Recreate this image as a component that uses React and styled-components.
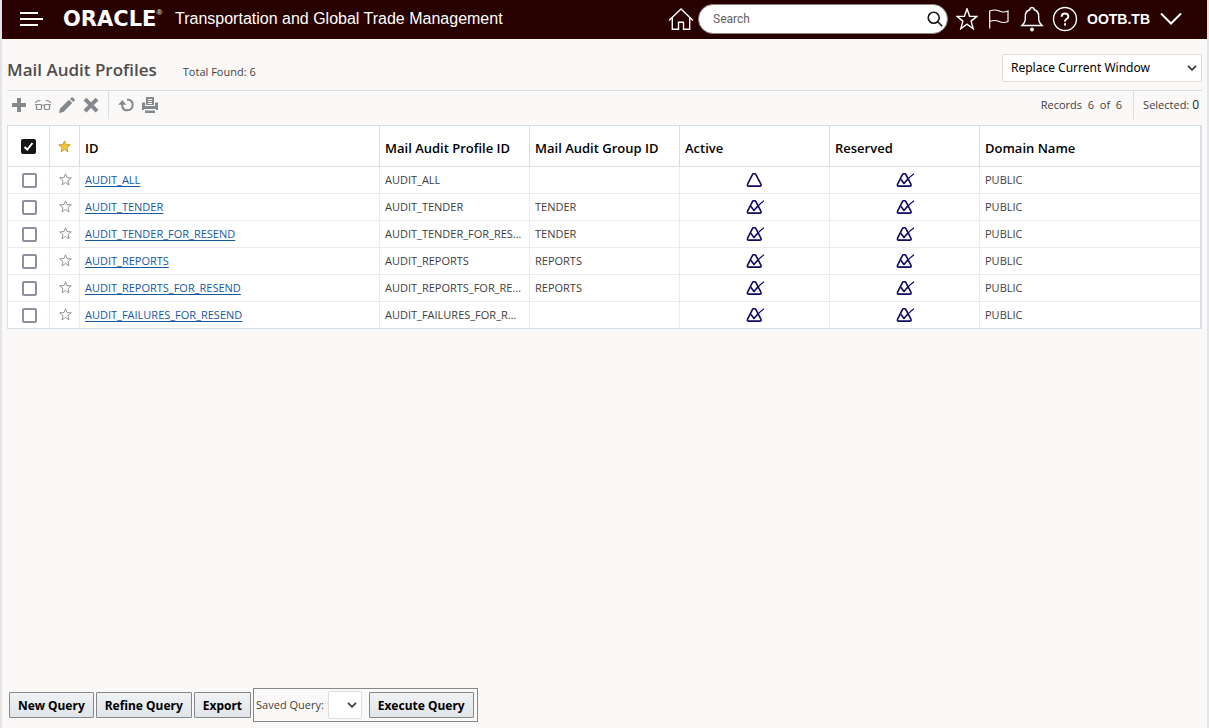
import React from 'react';
import styled, { createGlobalStyle } from 'styled-components';

const sans = '"Open Sans", "Noto Sans", sans-serif';
const noto = '"Noto Sans", "Open Sans", sans-serif';
const arial = '"Liberation Sans", Arial, sans-serif';

const GlobalStyle = createGlobalStyle`
  * { box-sizing: border-box; }
  body { margin: 0; background: #fbf9f8; color: #3f3d3c; font: 12px/16px ${sans}; }
  button, select, input { font: inherit; margin: 0; }
`;

const Page = styled.div`
  min-height: 100vh;
  display: flex;
  flex-direction: column;
  border: solid #e4e3e5;
  border-width: 0 2px;
`;

const Header = styled.header`
  height: 39px;
  display: flex;
  align-items: center;
  padding: 0 25px 2px 18px;
  background: #290000;
  color: #fff;
`;

const IconButton = styled.button`
  display: flex;
  flex: none;
  padding: 0;
  border: 0;
  background: none;
  color: inherit;
  cursor: pointer;
`;

const Brand = styled.a`
  display: flex;
  margin-left: 20px;
  width: 112px;
  color: #fff;
  text-decoration: none;
  font: bold 21px/24px "DejaVu Sans", sans-serif;
`;

const Mark = styled.sup`
  font: 8px/12px ${arial};
`;

const Product = styled.span`
  flex: 1;
  white-space: nowrap;
  font: 16px/20px ${arial};
`;

const HeaderTools = styled.nav`
  display: flex;
  align-items: center;
  gap: 8px;
`;

const SearchBox = styled.label`
  display: flex;
  align-items: center;
  width: 250px;
  height: 30px;
  margin-left: -4px;
  padding: 0 4px 0 14px;
  border: 1px solid #8b8580;
  border-radius: 15px;
  background: #fff;
  color: #161513;
`;

const SearchInput = styled.input`
  flex: 1;
  min-width: 0;
  padding: 0;
  border: 0;
  outline: 0;
  background: none;
  font: 12px/16px Roboto, ${arial};
  &::placeholder { color: #67605f; opacity: 1; }
`;

const UserName = styled.span`
  margin: 0 2px 0 1px;
  font: bold 14px/16px ${arial};
`;

const Main = styled.main`
  flex: 1;
  padding: 0 5px;
`;

const TitleRow = styled.div`
  display: flex;
  align-items: center;
  height: 52px;
  padding-top: 6px;
  border-bottom: 1px solid #d5dfe8;
`;

const Title = styled.h1`
  margin: 0 26px 0 0;
  padding-top: 5px;
  color: #4f4d4c;
  font: 600 17px/24px ${sans};
`;

const Total = styled.span`
  flex: 1;
  padding-top: 8px;
  font-size: 11px;
`;

const Select = styled.select`
  appearance: none;
  width: ${(p) => p.$width}px;
  height: 28px;
  padding: 0 24px 0 8px;
  border: 1px solid #dfdcda;
  border-radius: 2px;
  background: transparent;
  color: #000;
  font: 12px/16px ${noto};
`;

const SelectWrap = styled.span`
  display: grid;
  align-items: center;
  background: #fff;
  > * { grid-area: 1 / 1; }
  > svg { justify-self: end; margin-right: 5px; pointer-events: none; }
`;

const Toolbar = styled.div`
  display: flex;
  height: 34px;
  padding-bottom: 6px;
  align-items: center;
  color: #84898e;
`;

const ToolGroup = styled.div`
  display: flex;
  flex: ${(p) => (p.$grow ? 1 : 'none')};
  align-items: center;
  gap: 6px;
  height: 28px;
  padding: 0 8px 0 3px;
  margin-right: ${(p) => (p.$grow ? 0 : 5)}px;
  border-right: 1px solid #d5dfe8;
`;

const Records = styled.span`
  flex: 1;
  text-align: right;
  padding-right: 3px;
  color: #3f3d3c;
  font-size: 11px;
  white-space: pre;
`;

const Selected = styled.span`
  padding: 0 3px 0 9px;
  color: #3f3d3c;
  font-size: 11px;
  b { font: 12px/16px ${sans}; color: #222; }
`;

const Table = styled.table`
  width: 100%;
  table-layout: fixed;
  border-collapse: separate;
  border-spacing: 0;
  border: 1px solid #d5dfe8;
  border-right-width: 2px;
  background: #fff;
`;

const Col = styled.col`
  width: ${(p) => p.$width};
`;

const Th = styled.th`
  height: 41px;
  padding: ${(p) => (p.$center ? 0 : '4px 5px 0')};
  border: solid #d5dfe8;
  border-width: 0 1px 1px 0;
  color: #000;
  text-align: ${(p) => (p.$center ? 'center' : 'left')};
  font: 600 13px/16px ${sans};
  &:last-child { border-right: 0; }
`;

const Td = styled.td`
  height: 27px;
  padding: ${(p) => (p.$center ? '0 0 0 2px' : '0 7px 0 5px')};
  border: solid #ebebec;
  border-width: 0 1px 1px 0;
  text-align: ${(p) => (p.$center ? 'center' : 'left')};
  font-size: 11px;
  overflow: hidden;
  white-space: nowrap;
  text-overflow: ellipsis;
  &:last-child { border-right: 0; }
  tr:last-child > & { border-bottom: 0; height: 26px; }
  svg { display: block; margin: 0 auto; }
`;

const RowLink = styled.a`
  color: #17599f;
  text-underline-offset: 2px;
`;

const CheckInput = styled.input`
  appearance: none;
  display: block;
  width: 15px;
  height: 15px;
  margin: 0 auto;
  border: 2px solid #918ea0;
  border-radius: 2px;
  background: #fff;
  &:checked { border-color: #161513; background: #161513; }
`;

const CheckBox = styled.label`
  display: grid;
  justify-content: center;
  > * { grid-area: 1 / 1; }
  > svg { pointer-events: none; }
`;

const FavButton = styled(IconButton)`
  margin: 0 auto;
  padding-bottom: ${(p) => (p.$head ? 0 : 2)}px;
`;

const Footer = styled.footer`
  display: flex;
  align-items: center;
  gap: 2px;
  padding: 0 7px 6px;
`;

const Button = styled.button`
  height: 26px;
  padding: 1px 8px 0;
  border: 1px solid #858789;
  border-radius: 1px;
  background: linear-gradient(#f0f2f4, #e0e5e9);
  color: #000;
  font: bold 12px/16px ${noto};
  white-space: nowrap;
`;

const SavedQuery = styled.div`
  display: flex;
  align-items: center;
  height: 34px;
  padding: 0 3px 0 2px;
  border: 1px solid #858789;
  label { margin-right: 4px; font-size: 11px; white-space: nowrap; }
  ${Button} { margin-left: 7px; }
`;

const Svg = ({ w, h = w, sw = 1.4, children }) => (
  <svg width={w} height={h} viewBox={`0 0 ${w} ${h}`} fill="none" stroke="currentColor" strokeWidth={sw} aria-hidden="true">
    {children}
  </svg>
);

const Chevron = () => <Svg w={10} h={6} sw={1.8}><path d="M1 .8l4 4 4-4" /></Svg>;

const Star = ({ gold }) => (
  <svg width="13" height="13" viewBox="0 0 13 13" fill={gold ? '#f4c33c' : 'none'} stroke={gold ? '#c59824' : '#85898e'} strokeWidth=".9" aria-hidden="true">
    <path d="M6.5.9l1.5 3.7 4.3.2-3.3 2.8 1 4.3-3.5-2.4L3 11.9l1-4.3L.7 4.8 5 4.6z" />
  </svg>
);

const Flag = ({ on }) => (
  <svg width="19" height="16" viewBox="0 0 19 16" fill="none" stroke="#0d0862" strokeWidth="1.6" strokeLinejoin="round" role="img" aria-label={on ? 'Yes' : 'No'}>
    <path d="M7.5 1.800h1.200q.8 0 1.200.8l5 9.600q.8 1.900-1.100 1.900H2.700q-1.900 0-1.100-1.900l4.800-9.600q.3-.8 1.100-.8z" />
    {on && <path d="M4.800 7.300l3.200 4.200L12 6.800" />}
    {on && <path strokeWidth="1.200" d="M11 8.200Q14 4.400 18 1.700" />}
  </svg>
);

const rows = [
  ['AUDIT_ALL', '', false],
  ['AUDIT_TENDER', 'TENDER', true],
  ['AUDIT_TENDER_FOR_RESEND', 'TENDER', true],
  ['AUDIT_REPORTS', 'REPORTS', true],
  ['AUDIT_REPORTS_FOR_RESEND', 'REPORTS', true],
  ['AUDIT_FAILURES_FOR_RESEND', '', true],
];

export default function App() {
  return (
    <>
      <GlobalStyle />
      <Page>
        <Header>
          <IconButton aria-label="Menu">
            <Svg w={23} h={16} sw={2}><path d="M0 2h18M0 8h23M0 14h18" /></Svg>
          </IconButton>
          <Brand href="#">ORACLE<Mark>®</Mark></Brand>
          <Product>Transportation and Global Trade Management</Product>
          <HeaderTools>
            <IconButton aria-label="Home">
              <Svg w={26} h={24}><path d="M1 13.500L13 2l12 11.500M4.300 11v11.300h6.200v-7h5v7h6.200V11" /></Svg>
            </IconButton>
            <SearchBox>
              <SearchInput placeholder="Search" aria-label="Search" />
              <Svg w={16} sw={1.600}><circle cx="6.700" cy="6.700" r="5.500" /><path d="M10.800 10.800l4.400 4.400" /></Svg>
            </SearchBox>
            <IconButton aria-label="Favorites">
              <Svg w={22}><path d="M11 .8l2.600 7.400 7.400.2-5.900 4.700 2.100 7.600-6.200-4.500-6.200 4.500 2.100-7.600L1 8.400l7.400-.2z" /></Svg>
            </IconButton>
            <IconButton aria-label="Flags">
              <Svg w={26} h={22} sw={1.200}><path d="M3.700 20.500V3q5.300-2 9.500 0t8.800 0v10.500q-4.600 2-8.800 0t-9.500 0" /></Svg>
            </IconButton>
            <IconButton aria-label="Notifications">
              <Svg w={24} h={26}>
                <path d="M2 19.500q3-2.500 3.300-6v-3q0-6 4.700-6.800V2.600q2-2 4 0v1.100q4.700.8 4.700 6.800v3q.3 3.500 3.300 6z" />
                <circle cx="12" cy="23.500" r="1.900" fill="currentColor" stroke="none" />
              </Svg>
            </IconButton>
            <IconButton aria-label="Help">
              <Svg w={26}>
                <circle cx="13" cy="13" r="11.500" />
                <path strokeWidth="2" d="M9.700 10.700q0-3.300 3.300-3.300t3.300 3q0 1.500-1.700 2.600T13 15.600" />
                <path strokeWidth="2" d="M13 17.300v2.200" />
              </Svg>
            </IconButton>
            <UserName>OOTB.TB</UserName>
            <IconButton aria-label="User menu">
              <Svg w={22} h={14} sw={2}><path d="M1 1.500l10 10 10-10" /></Svg>
            </IconButton>
          </HeaderTools>
        </Header>
        <Main>
          <TitleRow>
            <Title>Mail Audit Profiles</Title>
            <Total>Total Found: 6</Total>
            <SelectWrap>
              <Select $width={200} aria-label="Open in"><option>Replace Current Window</option></Select>
              <Chevron />
            </SelectWrap>
          </TitleRow>
          <Toolbar>
            <ToolGroup>
              <IconButton aria-label="New"><Svg w={18} sw={4}><path d="M9 2v14M2 9h14" /></Svg></IconButton>
              <IconButton aria-label="View">
                <Svg w={18} sw={1.200}>
                  <rect x="2.500" y="8.500" width="5" height="5" rx="1" /><rect x="10.500" y="8.500" width="5" height="5" rx="1" />
                  <path d="M7.500 9.500q1.500-1 3 0M1 8.500h1.500M15.500 8.500H17M1.500 7q.5-2.500 5-2.500M16.500 7q-.5-2.500-5-2.500" />
                </Svg>
              </IconButton>
              <IconButton aria-label="Edit">
                <Svg w={18} sw={0}><path fill="currentColor" d="M1 17l1-4.600L11 3.800 14.200 7l-8.700 8.900zM12 2.900l1.300-1.300q.8-.7 1.600 0l1.600 1.600q.7.800 0 1.500l-1.300 1.400z" /></Svg>
              </IconButton>
              <IconButton aria-label="Delete"><Svg w={18} sw={4}><path d="M3 3.200l12 12M15 3.200l-12 12" /></Svg></IconButton>
            </ToolGroup>
            <ToolGroup $grow>
              <IconButton aria-label="Refresh">
                <Svg w={18} sw={2}><path d="M10 3.600q5.700.3 5.700 5.400-.3 5-5.500 5.300-3.500 0-4.900-3.300V8" /><path strokeWidth="0" fill="currentColor" d="M1.300 8.800L5.300 4l4 4.800z" /></Svg>
              </IconButton>
              <IconButton aria-label="Print">
                <Svg w={18} sw={0}>
                  <path fill="currentColor" fillRule="evenodd" d="M5 1h8v8H5zM7 3v1h4V3zM7 5v1h4V5zM7 7v1h4V7zM1 6.500h3v3.500h10V6.500h3V14H1zM4 14.500h10V17H4z" />
                  <path stroke="#fbf9f8" strokeWidth="1" d="M3 13.500h12" />
                </Svg>
              </IconButton>
              <Records>{'Records  6  of  6'}</Records>
            </ToolGroup>
            <Selected>Selected: <b>0</b></Selected>
          </Toolbar>
          <Table>
            <colgroup>
              <Col $width="42px" /><Col $width="30px" /><Col $width="300px" /><Col $width="150px" />
              <Col $width="150px" /><Col $width="150px" /><Col $width="150px" /><Col $width="auto" />
            </colgroup>
            <thead>
              <tr>
                <Th $center>
                  <CheckBox>
                    <CheckInput type="checkbox" defaultChecked aria-label="Select all" />
                    <svg width="15" height="15" viewBox="0 0 15 15" fill="none" stroke="#fff" strokeWidth="2" aria-hidden="true"><path d="M3.500 8l2.800 2.600L11.500 4" /></svg>
                  </CheckBox>
                </Th>
                <Th $center><FavButton $head aria-label="Favorites first"><Star gold /></FavButton></Th>
                <Th>ID</Th><Th>Mail Audit Profile ID</Th><Th>Mail Audit Group ID</Th>
                <Th>Active</Th><Th>Reserved</Th><Th>Domain Name</Th>
              </tr>
            </thead>
            <tbody>
              {rows.map(([id, group, active]) => (
                <tr key={id}>
                  <Td $center><CheckInput type="checkbox" aria-label={`Select ${id}`} /></Td>
                  <Td $center><FavButton aria-label={`Favorite ${id}`}><Star /></FavButton></Td>
                  <Td><RowLink href="#">{id}</RowLink></Td>
                  <Td>{id}</Td>
                  <Td>{group}</Td>
                  <Td $center><Flag on={active} /></Td>
                  <Td $center><Flag on /></Td>
                  <Td>PUBLIC</Td>
                </tr>
              ))}
            </tbody>
          </Table>
        </Main>
        <Footer>
          <Button>New Query</Button>
          <Button>Refine Query</Button>
          <Button>Export</Button>
          <SavedQuery>
            <label htmlFor="saved">Saved Query:</label>
            <SelectWrap>
              <Select id="saved" $width={32}><option> </option></Select>
              <Chevron />
            </SelectWrap>
            <Button>Execute Query</Button>
          </SavedQuery>
        </Footer>
      </Page>
    </>
  );
}
